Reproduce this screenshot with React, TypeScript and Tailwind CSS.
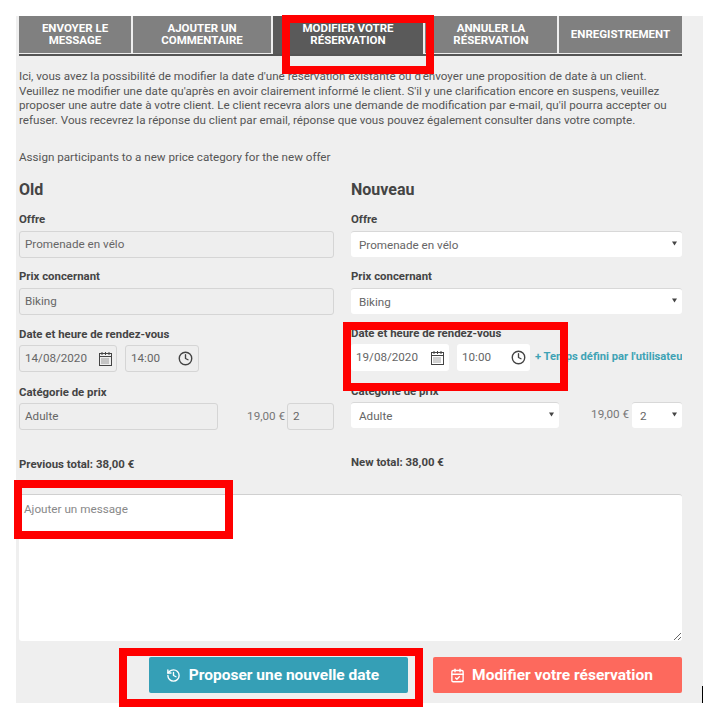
import { CalendarCheck, Clock, History } from "lucide-react";

const tabs = [
  { label: ["Envoyer le", "message"], width: "w-[112px]" },
  { label: ["Ajouter un", "commentaire"], width: "w-[138px]" },
  { label: ["Modifier votre", "réservation"], width: "w-[150px]", active: true },
  { label: ["Annuler la", "réservation"], width: "w-[132px]" },
  { label: ["Enregistrement"], width: "w-[123px]" },
];

const Label = ({ children, className = "" }: { children: React.ReactNode; className?: string }) => (
  <div className={`text-[11.4px] leading-[14px] font-bold text-[#444] ${className}`}>{children}</div>
);

const Locked = ({ children, className = "" }: { children: React.ReactNode; className?: string }) => (
  <div className={`h-[27px] flex items-center pl-[5px] rounded-[3px] border border-[#d5d5d5] bg-[#eeeeee] text-[11.65px] text-[#666] ${className}`}>
    {children}
  </div>
);

const Caret = () => (
  <svg width="5" height="5" viewBox="0 0 6 5" className="absolute right-[5px] top-[9px]">
    <path d="M0 0h6L3 5z" fill="#444" />
  </svg>
);

const Select = ({ children, className = "" }: { children: React.ReactNode; className?: string }) => (
  <div className={`relative h-[26px] flex items-center pl-2 pt-[2px] rounded-[3px] border-t border-[#d8d8d8] bg-white text-[11.65px] text-[#666] ${className}`}>
    {children}
    <Caret />
  </div>
);

// calendar with the dense dot grid of the date fields
const DateIcon = () => (
  <svg width="13" height="14" viewBox="0 0 13 14" fill="none" stroke="#444" strokeWidth="1">
    <rect x="0.5" y="1.5" width="12" height="12" />
    <path d="M0.5 4.5h12M3 0v3M6.5 0v3M10 0v3" />
    <path d="M2.5 7h8M2.5 9h8M2.5 11h8" strokeDasharray="1 1" />
  </svg>
);

const Box = ({ className }: { className: string }) => (
  <div className={`absolute border-[8px] border-[#ff0000] ${className}`} />
);

export default function App() {
  return (
    <div className="relative h-[714px] w-[704px] bg-white pt-4 pl-4 font-['Roboto',sans-serif] overflow-hidden">
      <div className="h-[687px] w-[687px] bg-[#efefef] pl-[3px] pr-[21px]">
        <div className="flex gap-[2px] border-b-2 border-[#555] h-[40px]">
          {tabs.map((tab) => (
            <div
              key={tab.label[0]}
              className={`${tab.width} h-[37px] pb-[2px] flex flex-col items-center justify-center text-[11.5px] leading-[12px] font-bold uppercase text-white ${tab.active ? "bg-[#5a5a5a] h-[38px]" : "bg-[#808080]"}`}
            >
              {tab.label.map((line) => (
                <span key={line}>{line}</span>
              ))}
            </div>
          ))}
        </div>

        <p className="mt-[13px] text-[11.63px] leading-[14.6px] text-[#555] whitespace-nowrap">
          Ici, vous avez la possibilité de modifier la date d'une réservation existante ou d'envoyer une proposition de date à un client.
          <br />
          Veuillez ne modifier une date qu'après en avoir clairement informé le client. S'il y une clarification encore en suspens, veuillez
          <br />
          proposer une autre date à votre client. Le client recevra alors une demande de modification par e-mail, qu'il pourra accepter ou
          <br />
          refuser. Vous recevrez la réponse du client par email, réponse que vous pouvez également consulter dans votre compte.
        </p>
        <p className="mt-[23px] text-[11.63px] leading-[15px] text-[#555]">Assign participants to a new price category for the new offer</p>

        <div className="mt-[15px] grid grid-cols-[315px_331px] gap-x-[17px]">
          <div>
            <h2 className="text-[16px] leading-[20px] font-bold text-[#444]">Old</h2>
            <Label className="mt-[12px]">Offre</Label>
            <Locked className="mt-[5px]">Promenade en vélo</Locked>
            <Label className="mt-[11px]">Prix concernant</Label>
            <Locked className="mt-[5px]">Biking</Locked>
            <Label className="mt-[12px]">Date et heure de rendez-vous</Label>
            <div className="mt-[4px] flex gap-[8px]">
              <Locked className="w-[98px] justify-between pr-[4px]">
                14/08/2020
                <DateIcon />
              </Locked>
              <Locked className="w-[74px] justify-between pr-[5px]">
                14:00
                <Clock size={15} strokeWidth={2.2} className="text-[#444]" />
              </Locked>
            </div>
            <Label className="mt-[13px]">Catégorie de prix</Label>
            <div className="mt-[4px] flex items-center">
              <Locked className="w-[199px]">Adulte</Locked>
              <span className="ml-auto text-[11.65px] text-[#777]">19,00 €</span>
              <Locked className="ml-[2px] w-[47px]">2</Locked>
            </div>
            <Label className="mt-[27px]">Previous total: 38,00 €</Label>
          </div>

          <div>
            <h2 className="text-[16px] leading-[20px] font-bold text-[#444]">Nouveau</h2>
            <Label className="mt-[12px]">Offre</Label>
            <Select className="mt-[5px]">Promenade en vélo</Select>
            <Label className="mt-[12px]">Prix concernant</Label>
            <Select className="mt-[5px]">Biking</Select>
            <Label className="mt-[12px]">Date et heure de rendez-vous</Label>
            <div className="mt-[4px] flex items-center overflow-hidden whitespace-nowrap">
              <div className="w-[98px] h-[27px] shrink-0 flex items-center justify-between pl-[5px] pr-[5px] rounded-[3px] bg-white text-[11.65px] text-[#666]">
                19/08/2020
                <DateIcon />
              </div>
              <div className="ml-[8px] w-[73px] h-[27px] shrink-0 flex items-center justify-between pl-[5px] pr-[4px] rounded-[3px] bg-white text-[11.65px] text-[#666]">
                10:00
                <Clock size={15} strokeWidth={2.2} className="text-[#444]" />
              </div>
              <span className="ml-[5px] text-[11.2px] font-bold text-[#3fa3b5]">+ Temps défini par l'utilisateur</span>
            </div>
            <Label className="mt-[13px]">Catégorie de prix</Label>
            <div className="mt-[4px] flex items-center">
              <Select className="w-[208px]">Adulte</Select>
              <span className="ml-auto mb-[2px] text-[11.65px] text-[#777]">19,00 €</span>
              <Select className="ml-[3px] w-[50px]">2</Select>
            </div>
            <Label className="mt-[27px]">New total: 38,00 €</Label>
          </div>
        </div>

        <textarea
          placeholder="Ajouter un message"
          className="mt-[23px] block h-[147px] w-full rounded-[3px] border-t border-[#d0d0d0] bg-white pl-[5px] pt-[6px] text-[11.7px] text-[#666] placeholder:text-[#888] outline-none"
        />

        <div className="mt-[16px] flex justify-end gap-[25px]">
          <button className="h-[36px] w-[259px] flex items-center justify-center gap-[8px] pr-[12px] rounded-[2px] bg-[#359fb6] text-[15.5px] font-bold text-white">
            <History size={15} strokeWidth={2.2} />
            Proposer une nouvelle date
          </button>
          <button className="h-[36px] w-[249px] flex items-center justify-center gap-[7px] pr-[12px] rounded-[2px] bg-[#fd695d] text-[15.5px] font-bold text-white">
            <CalendarCheck size={15} strokeWidth={2.2} />
            Modifier votre réservation
          </button>
        </div>
      </div>

      <Box className="left-[282px] top-[15px] w-[152px] h-[59px]" />
      <Box className="left-[343px] top-[322px] w-[225px] h-[69px]" />
      <Box className="left-[14px] top-[480px] w-[219px] h-[59px]" />
      <Box className="left-[119px] top-[648px] w-[304px] h-[59px]" />
      <div className="absolute left-[702px] top-[686px] h-[17px] w-px bg-black" />
    </div>
  );
}
